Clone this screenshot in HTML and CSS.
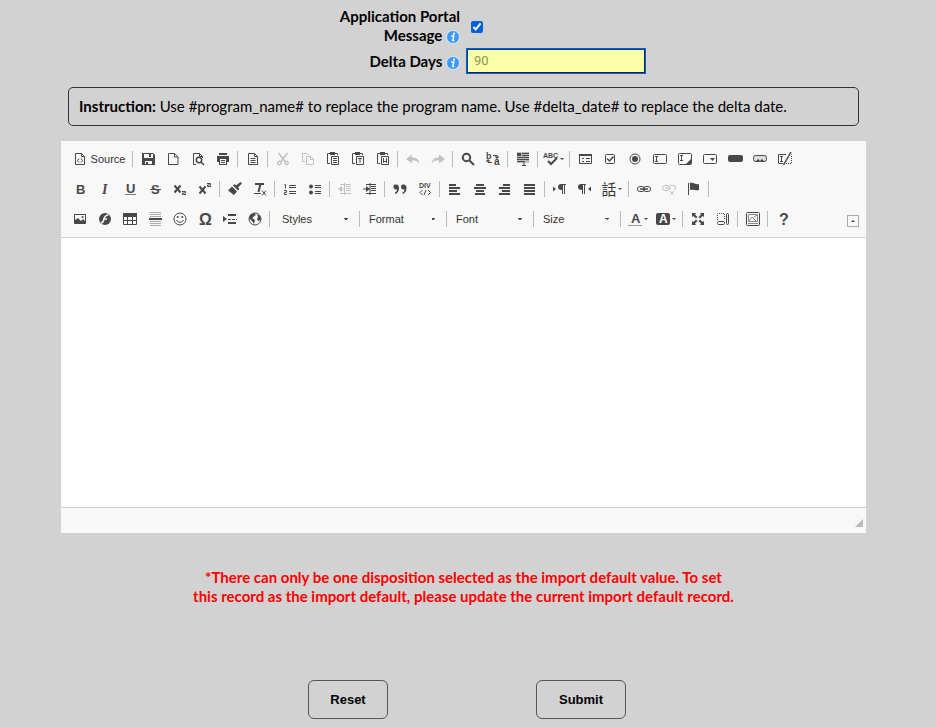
FILE: index.html
```html
<!DOCTYPE html>
<html lang="en">
<head>
<meta charset="utf-8">
<title>Disposition settings</title>
<link rel="stylesheet" href="styles.css">
</head>
<body>
<form class="page">
  <div class="fields">
    <label class="field-label" for="portal">Application Portal Message
      <svg class="info" viewBox="0 0 14 14"><circle cx="7" cy="7" r="6.5" fill="#3b99fc" stroke="#dcebfb"/><circle cx="8" cy="3.7" r="1.1" fill="#fff"/><path d="M5.3 6h2.4L6.8 10.6h1.5" fill="none" stroke="#fff" stroke-width="1.5"/></svg></label>
    <input class="check" type="checkbox" id="portal" checked>
    <label class="field-label" for="delta">Delta Days
      <svg class="info" viewBox="0 0 14 14"><circle cx="7" cy="7" r="6.5" fill="#3b99fc" stroke="#dcebfb"/><circle cx="8" cy="3.7" r="1.1" fill="#fff"/><path d="M5.3 6h2.4L6.8 10.6h1.5" fill="none" stroke="#fff" stroke-width="1.5"/></svg></label>
    <input class="days" type="text" id="delta" value="90">
  </div>

  <p class="instruction"><b>Instruction:</b> Use #program_name# to replace the program name. Use #delta_date# to replace the delta date.</p>

  <div class="editor">
    <div class="toolbar">
      <div class="rows">
        <div class="row">
          <button type="button" class="tool source"><svg viewBox="0 0 16 16"><path class="s" d="M3.5 2.5h6l3 3v8h-9z"/><path class="s" d="M9.500 2.500v3h3M7 7.500L5.500 9.500 7 11.500M9 7.500l1.500 2L9 11.500"/></svg>Source</button>
          <span class="sep"></span>
          <button type="button" class="tool" aria-label="Save"><svg viewBox="0 0 16 16"><path class="f" fill-rule="evenodd" d="M2 2h11l2 2v10H2zM4 3v4h9V3zM5 10v3h7v-3z"/><path class="f" d="M9 3h2v3H9zM6 11h2v2H6z"/></svg></button>
          <button type="button" class="tool" aria-label="New Page"><svg viewBox="0 0 16 16"><path class="s" d="M3.500 2.500h6l3.500 3.500v7.500h-9.500zM9.500 2.500V6H13"/></svg></button>
          <button type="button" class="tool" aria-label="Preview"><svg viewBox="0 0 16 16"><path class="s" d="M6 13.500H3.500v-11h6l3 3V7M9.500 2.500v3h3"/><circle class="s w" cx="9" cy="9" r="2.700"/><path class="s w" d="M11 11l3 3"/></svg></button>
          <button type="button" class="tool" aria-label="Print"><svg viewBox="0 0 16 16"><path class="f" fill-rule="evenodd" d="M4 2h8v2H4zM2 5h12v6h-2v3H4v-3H2zM5 8v5h6V8zM6 9h4v1H6zM6 11h4v1H6z"/></svg></button>
          <span class="sep"></span>
          <button type="button" class="tool" aria-label="Templates"><svg viewBox="0 0 16 16"><path class="s" d="M3.500 2.500h6l3 3v8h-9zM9.500 2.500v3h3M5.500 7.500h5M5.500 9.500h5M5.500 11.500h5"/></svg></button>
          <span class="sep"></span>
          <button type="button" class="tool off" aria-label="Cut"><svg viewBox="0 0 16 16"><path class="s w" d="M3.500 2L10 10.500M12.500 2L6 10.500"/><circle class="s w" cx="4.500" cy="12" r="1.700"/><circle class="s w" cx="11.500" cy="12" r="1.700"/></svg></button>
          <button type="button" class="tool off" aria-label="Copy"><svg viewBox="0 0 16 16"><path class="s" d="M5 10.500H2.500v-8H7L9 4.500M6.500 5.500h4.500l2.500 2.500v5.500h-7zM10.500 5.500v3h3"/></svg></button>
          <button type="button" class="tool" aria-label="Paste"><svg viewBox="0 0 16 16"><path class="s" d="M5 12.500H2.500v-10H5M10 2.500h2.500V4M6.500 5.500h7v8h-7zM8 7.500h4M8 9.500h4M8 11.500h4"/><path class="f" d="M5 1h5v3H5z"/></svg></button>
          <button type="button" class="tool" aria-label="Paste as plain text"><svg viewBox="0 0 16 16"><path class="s" d="M5 12.500H2.500v-10H5M10 2.500h2.500V4M6.500 5.500h7v8h-7zM8 7.500h4M10 7.500v4.500"/><path class="f" d="M5 1h5v3H5z"/></svg></button>
          <button type="button" class="tool" aria-label="Paste from Word"><svg viewBox="0 0 16 16"><path class="s" d="M5 12.500H2.500v-10H5M10 2.500h2.500V4M6.500 5.500h7v8h-7zM8.500 7v4.500L10 10l1.500 1.500V7"/><path class="f" d="M5 1h5v3H5z"/></svg></button>
          <span class="sep"></span>
          <button type="button" class="tool off" aria-label="Undo"><svg viewBox="0 0 16 16"><path class="f" d="M1 8l6-4.500v3c4 0 6.500 1.500 7.500 6C12.500 10 10.500 9.500 7 9.500v3z"/></svg></button>
          <button type="button" class="tool off" aria-label="Redo"><svg viewBox="0 0 16 16"><path class="f" d="M15 8L9 3.500v3c-4 0-6.500 1.500-7.500 6C3.500 10 5.500 9.500 9 9.500v3z"/></svg></button>
          <span class="sep"></span>
          <button type="button" class="tool" aria-label="Find"><svg viewBox="0 0 16 16"><circle class="s x" cx="6.500" cy="6.500" r="3.700"/><path class="s x" d="M9.500 9.500l4.500 4.500"/></svg></button>
          <button type="button" class="tool" aria-label="Replace"><svg viewBox="0 0 16 16"><text class="t" x="1" y="8" font-size="9">b</text><text class="t" x="9" y="14" font-size="10">a</text><path class="s" d="M8 4.500h4v2M7 11.500H3v-2"/><path class="f" d="M9.500 5.500h5L12 8zM.500 10.500h5L3 8z"/></svg></button>
          <span class="sep"></span>
          <button type="button" class="tool" aria-label="Select All"><svg viewBox="0 0 16 16"><path fill="#bbb" d="M2 1h12v11H2z"/><path class="s" d="M7 2.500h7M7 4.500h7M2 6.500h12M2 8.500h12M2 10.500h7M7 14.500h4M9 10v4"/><path class="f" d="M2 2h4v3H2z"/></svg></button>
          <span class="sep"></span>
          <button type="button" class="tool menu spell" aria-label="Spell Check"><svg viewBox="0 0 16 16"><text class="t" x="0" y="7" font-size="7">ABC</text><path class="s x" d="M5 10l3 3 6-6"/></svg></button>
          <span class="sep"></span>
          <button type="button" class="tool" aria-label="Form"><svg viewBox="0 0 16 16"><path class="s" d="M2.500 3.500h12v9h-12zM5 7.500h2M9 7.500h4M5 10.500h2M9 10.500h4"/><path class="f" d="M2 3h13v2H2z"/></svg></button>
          <button type="button" class="tool" aria-label="Checkbox"><svg viewBox="0 0 16 16"><rect class="s" x="3.500" y="3.500" width="9" height="9" rx="1"/><path class="s w" d="M5 7.500l2.500 2.500 4-4.500"/></svg></button>
          <button type="button" class="tool" aria-label="Radio Button"><svg viewBox="0 0 16 16"><circle class="s" cx="8" cy="8" r="5"/><circle class="f" cx="8" cy="8" r="3"/></svg></button>
          <button type="button" class="tool" aria-label="Text Field"><svg viewBox="0 0 16 16"><rect class="s" x="1.500" y="3.500" width="13" height="9" rx="1"/><path class="s" d="M3 5.500h3M3 10.500h3M4.500 5.500v5"/></svg></button>
          <button type="button" class="tool" aria-label="Textarea"><svg viewBox="0 0 16 16"><rect class="s" x="1.500" y="2.500" width="13" height="11" rx="1"/><path class="s" d="M3 4.500h3M3 9.500h3M4.500 4.500v5"/><path class="f" d="M14 8v5H9z"/></svg></button>
          <button type="button" class="tool" aria-label="Selection Field"><svg viewBox="0 0 16 16"><rect class="s" x="1.500" y="3.500" width="13" height="9" rx="1"/><path class="f" d="M8 7h5l-2.500 3z"/></svg></button>
          <button type="button" class="tool" aria-label="Button"><svg viewBox="0 0 16 16"><rect class="f" x="1" y="4" width="15" height="7" rx="2"/></svg></button>
          <button type="button" class="tool" aria-label="Image Button"><svg viewBox="0 0 16 16"><rect x="1.500" y="4.500" width="13" height="6" rx="2" fill="#ddd" stroke="#484848"/><path class="f" d="M3 11l3-3 2 2 2-2 3 3z"/></svg></button>
          <button type="button" class="tool" aria-label="Hidden Field"><svg viewBox="0 0 16 16"><path class="s" d="M9 3.500H1.500v9H6M3 5.500h3M3 10.500h3M4.500 5.500v5"/><path class="s w" d="M14 1L6.500 14"/><path class="s" stroke-dasharray="1 1" d="M9 12.500h5.500v-9"/></svg></button>
        </div>
        <div class="row">
          <button type="button" class="tool" aria-label="Bold"><svg viewBox="0 0 16 16"><text class="t" x="4" y="13" font-size="13">B</text></svg></button>
          <button type="button" class="tool" aria-label="Italic"><svg viewBox="0 0 16 16"><text class="t serif" x="5" y="13" font-size="14">I</text></svg></button>
          <button type="button" class="tool" aria-label="Underline"><svg viewBox="0 0 16 16"><text class="t" x="4" y="12" font-size="13">U</text><path d="M3 13.500h11" stroke="#777"/></svg></button>
          <button type="button" class="tool" aria-label="Strikethrough"><svg viewBox="0 0 16 16"><text class="t" x="4" y="13" font-size="13">S</text><path class="s" d="M3 8.500h11"/></svg></button>
          <button type="button" class="tool" aria-label="Subscript"><svg viewBox="0 0 16 16"><path class="s x" d="M2.500 4.500l6 7M8.500 4.500l-6 7"/><path class="s" d="M10 10.500h3.500v1.500h-3v1.500H14"/></svg></button>
          <button type="button" class="tool" aria-label="Superscript"><svg viewBox="0 0 16 16"><path class="s x" d="M2.500 5.500l6 7M8.500 5.500l-6 7"/><path class="s" d="M10 2.500h3.500V4h-3v1.500H14"/></svg></button>
          <span class="sep"></span>
          <button type="button" class="tool" aria-label="Copy Formatting"><svg viewBox="0 0 16 16"><path class="f" d="M13.500 1l1.500 1.500-4 4L12.500 8 11 9.500l-5-5L7.500 3 9 4.500zM5 5.500l5 5L7 14 1 9.500z"/></svg></button>
          <button type="button" class="tool" aria-label="Remove Format"><svg viewBox="0 0 16 16"><path class="s x" d="M3 3h9M8.500 3L6.500 11"/><path class="s" d="M2 12.500h7M10 9.500l4 5M14 9.500l-4 5"/></svg></button>
          <span class="sep"></span>
          <button type="button" class="tool" aria-label="Numbered List"><svg viewBox="0 0 16 16"><path class="s" d="M2.500 3.500h1v4M2 9.500h2.500v2h-2v2H5M7 4.500h7M7 6.500h7M7 10.500h7M7 12.500h7"/></svg></button>
          <button type="button" class="tool" aria-label="Bulleted List"><svg viewBox="0 0 16 16"><circle class="f" cx="4" cy="5.500" r="2"/><circle class="f" cx="4" cy="11.500" r="2"/><path class="s" d="M8 4.500h6M8 6.500h6M8 10.500h6M8 12.500h6"/></svg></button>
          <span class="sep"></span>
          <button type="button" class="tool off" aria-label="Decrease Indent"><svg viewBox="0 0 16 16"><path class="s" d="M3 3.500h11M9 5.500h5M9 7.500h5M9 9.500h5M3 12.500h11M3 8h5M7.500 2v12"/><path class="f" d="M1 8l4-3v6z"/></svg></button>
          <button type="button" class="tool" aria-label="Increase Indent"><svg viewBox="0 0 16 16"><path class="s" d="M4 3.500h10M9 5.500h5M9 7.500h5M9 9.500h5M4 12.500h10M1 8h5M8 2v12"/><path class="f" d="M8 8L4 5v6z"/></svg></button>
          <span class="sep"></span>
          <button type="button" class="tool" aria-label="Block Quote"><svg viewBox="0 0 16 16"><path class="f" d="M4 3.500c2 0 3 1.200 3 3.500 0 3.500-1.500 5-4 6v-1.500c1-.500 2-1.500 2-3C3 8.500 1.500 8 1.500 6S2.500 3.500 4 3.500zM11.500 3.500c2 0 3 1.200 3 3.500 0 3.500-1.500 5-4 6v-1.500c1-.500 2-1.500 2-3-2 0-3.500-.500-3.500-2.500s1-2.500 2.500-2.500z"/></svg></button>
          <button type="button" class="tool" aria-label="Create Div"><svg viewBox="0 0 16 16"><text class="t" x="2" y="7" font-size="7">DIV</text><path class="s" d="M5.500 9L3 11.500 5.500 14M11 9l2.500 2.500L11 14M9 9l-2 5"/></svg></button>
          <span class="sep"></span>
          <button type="button" class="tool" aria-label="Align Left"><svg viewBox="0 0 16 16"><path class="f" d="M2 3h7v2H2zM2 6h11v2H2zM2 9h8v2H2zM2 12h11v2H2z"/></svg></button>
          <button type="button" class="tool" aria-label="Center"><svg viewBox="0 0 16 16"><path class="f" d="M4 3h8v2H4zM2 6h12v2H2zM4 9h8v2H4zM3 12h10v2H3z"/></svg></button>
          <button type="button" class="tool" aria-label="Align Right"><svg viewBox="0 0 16 16"><path class="f" d="M6 3h7v2H6zM2 6h11v2H2zM5 9h8v2H5zM2 12h11v2H2z"/></svg></button>
          <button type="button" class="tool" aria-label="Justify"><svg viewBox="0 0 16 16"><path class="f" d="M2 3h11v2H2zM2 6h11v2H2zM2 9h11v2H2zM2 12h11v2H2z"/></svg></button>
          <span class="sep"></span>
          <button type="button" class="tool" aria-label="Left to right"><svg viewBox="0 0 16 16"><path class="f" d="M1 5.500l3 2.500-3 2.500zM14 3v1h-1v9h-1V4h-1v9h-1V9C7 9 6 8 6 6s1-3 3-3z"/></svg></button>
          <button type="button" class="tool" aria-label="Right to left"><svg viewBox="0 0 16 16"><path class="f" d="M14 5.500L11 8l3 2.500zM9 3v1H8v9H7V4H6v9H5V9C2 9 1 8 1 6s1-3 3-3z"/></svg></button>
          <button type="button" class="tool menu lang cjk" aria-label="Language">話</button>
          <span class="sep"></span>
          <button type="button" class="tool" aria-label="Link"><svg viewBox="0 0 16 16"><rect class="s" x="1.500" y="5.500" width="7" height="5" rx="2.500"/><rect class="s" x="7.500" y="5.500" width="7" height="5" rx="2.500"/><path class="s w" d="M4 8h8"/></svg></button>
          <button type="button" class="tool off" aria-label="Unlink"><svg viewBox="0 0 16 16"><rect class="s" x="1.500" y="4.500" width="7" height="5" rx="2.500"/><path class="s" d="M4 7h6M9 4.500h3a2 2 0 0 1 1 4.500M9 10l4 4M13 10l-4 4"/></svg></button>
          <button type="button" class="tool" aria-label="Anchor"><svg viewBox="0 0 16 16"><path class="s" d="M2.500 2v12"/><path class="f" d="M4 2c4-1 5 2 9 1v6c-4 1-5-1-9 0z"/></svg></button>
          <span class="sep"></span>
        </div>
        <div class="row">
          <button type="button" class="tool" aria-label="Image"><svg viewBox="0 0 16 16"><path class="s" d="M2.500 3.500h11v9h-11z"/><path class="f" d="M3 12V9l3-2 3 3 2-2 3 3v1z"/><circle class="f" cx="10.500" cy="6" r="1"/></svg></button>
          <button type="button" class="tool" aria-label="Flash"><svg viewBox="0 0 16 16"><circle class="f" cx="8" cy="8" r="6"/><path d="M11.500 4C8 4 7.500 6 7 8s-1 4-3 4M6 8h4" fill="none" stroke="#f8f8f8" stroke-width="1.500"/></svg></button>
          <button type="button" class="tool" aria-label="Table"><svg viewBox="0 0 16 16"><path class="s" d="M1.500 3v10.500h13V3M1.500 9.500h13M5.500 5v8M10.500 5v8"/><path class="f" d="M1 2h14v4H1z"/></svg></button>
          <button type="button" class="tool" aria-label="Horizontal Line"><svg viewBox="0 0 16 16"><path d="M3 1.500h11M3 3.500h11M3 5.500h11M3 10.500h11M3 12.500h11M3 14.500h11" stroke="#aaa"/><path class="f" d="M2 7h13v2H2z"/></svg></button>
          <button type="button" class="tool" aria-label="Smiley"><svg viewBox="0 0 16 16"><circle class="s" cx="8" cy="8" r="6"/><circle class="f" cx="5.700" cy="6" r="1"/><circle class="f" cx="10.300" cy="6" r="1"/><path class="s" d="M4.500 9c1 3 6 3 7 0"/></svg></button>
          <button type="button" class="tool" aria-label="Special Character"><svg viewBox="0 0 16 16"><text class="t" x="2" y="14" font-size="16">Ω</text></svg></button>
          <button type="button" class="tool" aria-label="Page Break"><svg viewBox="0 0 16 16"><path class="f" d="M1 5l4 3-4 3zM6 3h8v2H6zM6 11h8v2H6z"/><path class="s" stroke-dasharray="3 1" d="M6 8.500h9"/></svg></button>
          <button type="button" class="tool" aria-label="IFrame"><svg viewBox="0 0 16 16"><circle class="s" cx="8" cy="8" r="6"/><path class="f" d="M3 4l4-2 2 2-2 1-1 1.500-1 .500 3 2-1 4-2-3-3-3zM10 3l3 2 1 4-3 1-1-2 1-2z"/></svg></button>
          <span class="sep"></span>
          <select class="combo first" aria-label="Styles"><option>Styles</option></select>
          <span class="sep"></span>
          <select class="combo" aria-label="Format"><option>Format</option></select>
          <span class="sep"></span>
          <select class="combo" aria-label="Font"><option>Font</option></select>
          <span class="sep"></span>
          <select class="combo" aria-label="Size"><option>Size</option></select>
          <span class="sep"></span>
          <button type="button" class="tool menu" aria-label="Text Color"><svg viewBox="0 0 16 16"><text class="t" x="4" y="12" font-size="13">A</text><path d="M1 14.500h14" stroke="#999"/></svg></button>
          <button type="button" class="tool menu lang" aria-label="Background Color"><svg viewBox="0 0 16 16"><rect class="f" x="1" y="2" width="14" height="12" rx="2"/><text class="t inv" x="4" y="12" font-size="12">A</text></svg></button>
          <span class="sep"></span>
          <button type="button" class="tool" aria-label="Maximize"><svg viewBox="0 0 16 16"><path class="f" d="M2 2h4L5 3.500 7.500 6 6 7.500 3.500 5 2 6zM14 2v4l-1.500-1L10 7.500 8.500 6 11 3.500 10 2zM2 14v-4l1.500 1L6 8.500 7.500 10 5 12.500 6 14zM14 14h-4l1-1.500L8.500 10 10 8.500l2.500 2.500 1.500-1z"/></svg></button>
          <button type="button" class="tool" aria-label="Show Blocks"><svg viewBox="0 0 16 16"><path class="s" stroke-dasharray="1 1" d="M2.500 9V2.500h7V9"/><rect class="s" x="2.500" y="10.500" width="7" height="3" rx="1"/><rect class="s" x="11.500" y="2.500" width="2" height="11" rx="1"/></svg></button>
          <span class="sep"></span>
          <button type="button" class="tool" aria-label="Media Browser"><svg viewBox="0 0 16 16"><rect class="s" x="1.500" y="1.500" width="13" height="13" rx="1"/><path d="M3.500 3.500h9v7h-9zM4 10l3-4 5 5M9 6l3-2M3 12.500h10" fill="none" stroke="#888"/></svg></button>
          <span class="sep"></span>
          <button type="button" class="tool" aria-label="About"><svg viewBox="0 0 16 16"><text class="t" x="4" y="14" font-size="16">?</text></svg></button>
        </div>
      </div>
      <button type="button" class="collapse" aria-label="Collapse toolbar"></button>
    </div>
    <textarea class="content" aria-label="Message"></textarea>
    <div class="status"><svg viewBox="0 0 8 8"><path d="M8 0v8H0z" fill="#bbb"/></svg></div>
  </div>

  <p class="warning">*There can only be one disposition selected as the import default value. To set<br>this record as the import default, please update the current import default record.</p>

  <div class="actions">
    <button type="reset" class="action">Reset</button>
    <button type="submit" class="action wide">Submit</button>
  </div>
</form>
</body>
</html>
```
FILE: styles.css
```css
* { box-sizing: border-box; }

body {
  margin: 0;
  background: #d2d2d2;
  color: #000;
  font: 15px/19px Lato, "Liberation Sans", sans-serif;
}

.page { padding: 7px 70px 8px 61px; }

.fields {
  display: grid;
  grid-template-columns: 1fr 1fr;
  column-gap: 6px;
  row-gap: 3px;
  align-items: center;
  padding-right: 1px;
}

.field-label {
  justify-self: end;
  max-width: 150px;
  text-align: right;
  font-weight: bold;
}

.info {
  width: 14px;
  height: 14px;
  vertical-align: -3px;
}

.check {
  width: 12px;
  height: 12px;
  margin: 2px 5px 0;
  accent-color: #0060df;
}

.days {
  width: 180px;
  height: 26px;
  padding: 0 6px 2px;
  border: 2px solid #1b1b1b;
  border-color: #0a3f8c #15233c #15233c #0a3f8c;
  outline: 1px solid #0060df;
  outline-offset: -1px;
  background: #faffa8;
  color: #8f9355;
  font: 13px/20px Roboto, sans-serif;
}

.instruction {
  margin: 13px 7px 15px;
  padding: 9px 10px;
  border: 1px solid #333;
  border-radius: 5px;
}

.editor { background: #f8f8f8; }

.toolbar {
  display: flex;
  align-items: flex-end;
  justify-content: space-between;
  padding: 3px 7px 3px 6px;
  border-bottom: 1px solid #d1d1d1;
}

.row {
  display: flex;
  align-items: center;
  height: 30px;
}

.tool {
  display: flex;
  flex: none;
  align-items: center;
  justify-content: center;
  width: 25px;
  height: 24px;
  padding: 0;
  border: 0;
  background: none;
  color: #333;
  font: 11px/16px "Liberation Sans", sans-serif;
}

.tool svg { flex: none; width: 16px; height: 16px; }
.source { gap: 3px; width: 63px; }
.off { opacity: 0.3; }
.menu { width: 28px; gap: 1px; }
.lang { width: 29px; }
.spell { width: 27px; }
.cjk { font: 15px/16px "Noto Sans CJK TC", sans-serif; }

.menu::after {
  content: "";
  border: 2px solid transparent;
  border-top-color: #484848;
  border-bottom: 0;
}

.s { fill: none; stroke: #484848; stroke-width: 1; }
.w { stroke-width: 1.5; }
.x { stroke-width: 2; }
.f { fill: #484848; }
.t { fill: #484848; font-family: "Liberation Sans", sans-serif; font-weight: bold; }
.serif { font-family: "Liberation Serif", serif; font-style: italic; }
.inv { fill: #fff; }

.sep {
  flex: none;
  width: 1px;
  height: 16px;
  margin: 0 2px;
  background: #bcbcbc;
}

.combo {
  width: 82px;
  height: 24px;
  padding: 0 7px;
  border: 0;
  appearance: none;
  background: conic-gradient(from -45deg at 50% 100%, #484848 90deg, transparent 0) right 9px center / 4px 2px no-repeat;
  color: #333;
  font: 11px/16px "Liberation Sans", sans-serif;
}

.first { margin-left: 3px; }

.collapse {
  display: flex;
  align-items: center;
  justify-content: center;
  width: 12px;
  height: 12px;
  margin-bottom: 7px;
  padding: 0;
  border: 1px solid #aaa;
  background: none;
}

.collapse::after {
  content: "";
  border: 2px solid transparent;
  border-bottom-color: #484848;
  border-top: 0;
}

.content {
  display: block;
  width: 100%;
  height: 269px;
  border: 0;
  background: #fff;
  resize: none;
  outline: 0;
}

.status {
  display: flex;
  justify-content: flex-end;
  align-items: center;
  height: 26px;
  padding: 4px 3px 0;
  border-top: 1px solid #d1d1d1;
}

.status svg { width: 8px; height: 8px; }

.warning {
  margin: 35px 0 74px;
  color: #f00;
  font-weight: bold;
  text-align: center;
}

.actions {
  display: flex;
  justify-content: center;
  gap: 148px;
  padding-left: 7px;
}

.action {
  width: 80px;
  height: 39px;
  border: 1px solid #555;
  border-radius: 6px;
  background: none;
  color: #000;
  font: bold 13px/18px "Liberation Sans", sans-serif;
}

.wide { width: 90px; }
```
